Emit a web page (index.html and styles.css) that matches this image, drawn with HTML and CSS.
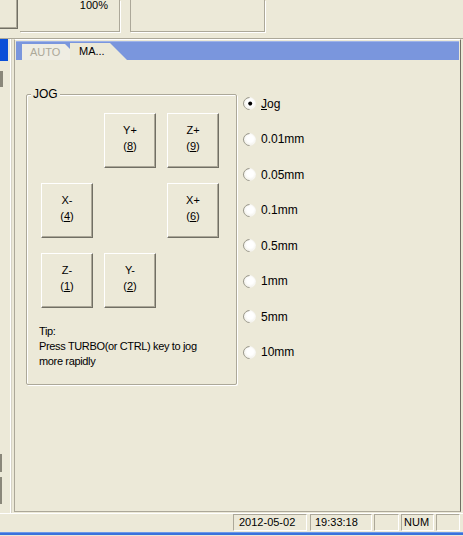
FILE: index.html
```html
<!DOCTYPE html>
<html>
<head>
<meta charset="utf-8">
<link rel="stylesheet" href="styles.css">
</head>
<body>
<div class="screen">
  <div class="top">
    <div class="tbtn"></div>
    <div class="zoompane"><span>100%</span></div>
    <div class="infopane"></div>
  </div>
  <div class="middle">
    <div class="leftpane">
      <div class="sel"></div>
      <div class="lbit lbit-a"></div>
      <div class="lbit lbit-b"></div>
      <div class="lbit lbit-c"></div>
    </div>
    <div class="main">
      <div class="tabstrip">
        <div class="tab tab-auto">AUTO</div>
        <div class="tab tab-active">MA...</div>
      </div>
      <div class="content">
        <div class="group">
          <div class="legend">JOG</div>
          <div class="jog-grid">
            <div class="cell"></div>
            <div class="jbtn">Y+<br>(<u>8</u>)</div>
            <div class="jbtn">Z+<br>(<u>9</u>)</div>
            <div class="jbtn">X-<br>(<u>4</u>)</div>
            <div class="cell"></div>
            <div class="jbtn">X+<br>(<u>6</u>)</div>
            <div class="jbtn">Z-<br>(<u>1</u>)</div>
            <div class="jbtn">Y-<br>(<u>2</u>)</div>
            <div class="cell"></div>
          </div>
          <div class="tip">Tip:<br>Press TURBO(or CTRL) key to jog<br>more rapidly</div>
        </div>
        <div class="radios">
          <div class="rrow"><span class="radio checked"></span><span class="rlabel"><u>J</u>og</span></div>
          <div class="rrow"><span class="radio"></span><span class="rlabel">0.01mm</span></div>
          <div class="rrow"><span class="radio"></span><span class="rlabel">0.05mm</span></div>
          <div class="rrow"><span class="radio"></span><span class="rlabel">0.1mm</span></div>
          <div class="rrow"><span class="radio"></span><span class="rlabel">0.5mm</span></div>
          <div class="rrow"><span class="radio"></span><span class="rlabel">1mm</span></div>
          <div class="rrow"><span class="radio"></span><span class="rlabel">5mm</span></div>
          <div class="rrow"><span class="radio"></span><span class="rlabel">10mm</span></div>
        </div>
      </div>
    </div>
  </div>
  <div class="status">
    <div class="spane sp1">2012-05-02</div>
    <div class="spane sp2">19:33:18</div>
    <div class="spane sp3"></div>
    <div class="spane sp4">NUM</div>
    <div class="spane sp5"></div>
  </div>
  <div class="taskbar"></div>
</div>
</body>
</html>
```
FILE: styles.css
```css
html, body {
  margin: 0;
  padding: 0;
  background: #ece9d8;
}
.screen {
  width: 463px;
  height: 536px;
  overflow: hidden;
  background: #ece9d8;
  font-family: "Liberation Sans", Arial, sans-serif;
  font-size: 11px;
  color: #000;
  display: flex;
  flex-direction: column;
}
/* top toolbar area */
.top {
  height: 39px;
  border-bottom: 1px solid #aca899;
  display: flex;
  align-items: flex-start;
  flex: none;
  box-sizing: border-box;
}
.tbtn {
  width: 18px;
  height: 29px;
  box-sizing: border-box;
  border-right: 1px solid #716f64;
  border-bottom: 1px solid #716f64;
  box-shadow: inset -1px -1px 0 #aca899;
}
.zoompane {
  margin-left: 2px;
  width: 100px;
  height: 32px;
  box-sizing: border-box;
  border-right: 1px solid #aca899;
  border-bottom: 1px solid #aca899;
  box-shadow: 1px 1px 0 #fff;
  text-align: right;
  padding-right: 11px;
  line-height: 10px;
}
.infopane {
  margin-left: 10px;
  width: 135px;
  height: 32px;
  box-sizing: border-box;
  border-left: 1px solid #aca899;
  border-right: 1px solid #aca899;
  border-bottom: 1px solid #aca899;
  box-shadow: 1px 1px 0 #fff;
}
/* middle */
.middle {
  height: 474px;
  display: flex;
  flex: none;
}
.leftpane {
  width: 10px;
  border-right: 1px solid #fff;
  box-shadow: 1px 0 0 #d6d3c6;
  display: flex;
  flex-direction: column;
}
.sel {
  width: 8px;
  height: 22px;
  background: #0a4fd8;
}
.lbit {
  background: #8a877a;
}
.lbit-a {
  width: 3px;
  height: 16px;
  margin-top: 10px;
}
.lbit-b {
  width: 2px;
  height: 18px;
  margin-top: 367px;
}
.lbit-c {
  width: 2px;
  height: 27px;
  margin-top: 5px;
}
.main {
  margin-left: 3px;
  width: 447px;
  height: 473px;
  box-sizing: border-box;
  border: 1px solid #aca899;
  border-top-color: #fff;
  border-right-color: #716f64;
  display: flex;
  flex-direction: column;
}
.tabstrip {
  margin: 1px 1px 0 1px;
  height: 19px;
  box-sizing: border-box;
  background: #7a96dd;
  border-top: 1px solid #9fb3e8;
  display: flex;
  align-items: flex-end;
  padding-left: 6px;
}
.tab {
  height: 16px;
  line-height: 16px;
  box-sizing: border-box;
}
.tab-auto {
  width: 48px;
  padding-left: 8px;
  color: #aca899;
  background: #efede3;
  clip-path: polygon(0 0, 43px 0, 48px 5px, 48px 100%, 0 100%);
}
.tab-active {
  width: 57px;
  height: 17px;
  line-height: 17px;
  padding-left: 9px;
  background: #ece9d8;
  clip-path: polygon(0 0, 40px 0, 57px 17px, 0 17px);
}
.content {
  display: flex;
  align-items: flex-start;
  padding: 24px 0 0 11px;
}
.group {
  margin-top: 10px;
  width: 211px;
  height: 291px;
  box-sizing: border-box;
  border: 1px solid #aca899;
  border-radius: 2px;
  box-shadow: inset 1px 1px 0 #fff, 1px 1px 0 #fff;
}
.legend {
  margin: -8px 0 0 4px;
  padding: 0 2px;
  width: fit-content;
  font-size: 12px;
  line-height: 14px;
  background: #ece9d8;
}
.jog-grid {
  margin: 12px 0 0 14px;
  display: grid;
  grid-template-columns: repeat(3, 52px);
  grid-auto-rows: 55px;
  column-gap: 11px;
  row-gap: 15px;
}
.jbtn {
  box-sizing: border-box;
  border: 1px solid;
  border-color: #fff #716f64 #716f64 #fff;
  box-shadow: inset -1px -1px 0 #aca899;
  background: #ece9d8;
  text-align: center;
  line-height: 16px;
  padding-top: 8px;
}
.tip {
  margin: 16px 0 0 12px;
  line-height: 15px;
  letter-spacing: -0.35px;
}
.radios {
  margin-left: 6px;
  padding-top: 2px;
}
.rrow {
  height: 35.5px;
  display: flex;
  align-items: center;
}
.radio {
  width: 13px;
  height: 13px;
  box-sizing: border-box;
  border-radius: 50%;
  border: 1px solid;
  border-color: #9a988c transparent transparent #9a988c;
  transform: rotate(-45deg);
  background: radial-gradient(circle at 60% 50%, #ffffff 40%, #e9e7dc 100%);
  display: flex;
  align-items: center;
  justify-content: center;
  flex: none;
}
.radio.checked::after {
  content: "";
  width: 4px;
  height: 4px;
  border-radius: 50%;
  background: #000;
}
.rlabel {
  margin-left: 5px;
  font-size: 12px;
}
/* status bar */
.status {
  height: 19px;
  border-top: 1px solid #fff;
  box-sizing: border-box;
  display: flex;
  justify-content: flex-end;
  align-items: flex-start;
  padding: 0 3px 0 0;
  gap: 2px;
  flex: none;
}
.spane {
  height: 17px;
  box-sizing: border-box;
  border: 1px solid;
  border-color: #aca899 #fff #fff #aca899;
  line-height: 15px;
  padding-left: 5px;
  white-space: nowrap;
}
.sp1 { width: 74px; margin-right: 1px; }
.sp2 { width: 62px; padding-left: 4px; }
.sp3 { width: 25px; }
.sp4 { width: 33px; padding-left: 2px; }
.sp5 { width: 24px; }
.taskbar {
  height: 3px;
  background: #3a72dc;
  border-top: 1px solid #6b98e8;
  box-sizing: border-box;
  flex: none;
}
```
